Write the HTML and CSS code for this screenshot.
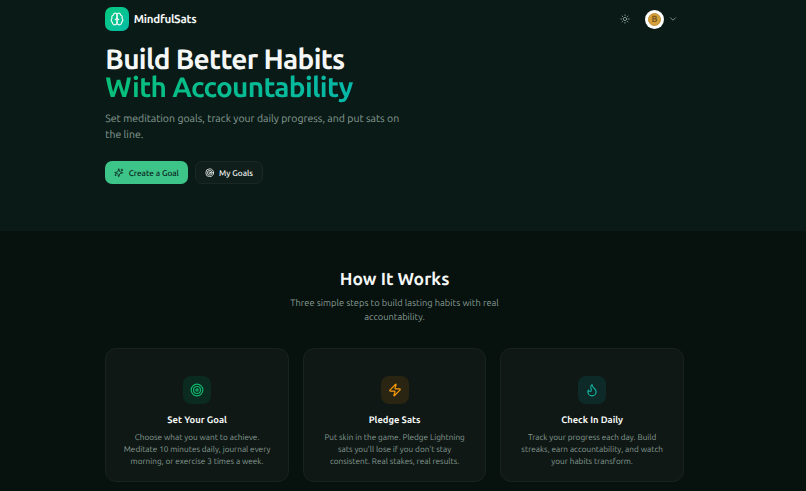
FILE: index.html
```html
<!DOCTYPE html>
<html lang="en">
<head>
    <meta charset="UTF-8">
    <meta name="viewport" content="width=device-width, initial-scale=1.0">
    <title>MindfulSats</title>
    <link rel="stylesheet" href="styles.css">
</head>
<body>
    <div class="hero">
        <header class="container header">
            <a class="brand">
                <span class="logo">
                    <svg class="icon" viewBox="0 0 24 24"><path d="M12 5a3 3 0 1 0-5.997.125 4 4 0 0 0-2.526 5.77 4 4 0 0 0 .556 6.588A4 4 0 1 0 12 18Z"/><path d="M12 5a3 3 0 1 1 5.997.125 4 4 0 0 1 2.526 5.77 4 4 0 0 1-.556 6.588A4 4 0 1 1 12 18Z"/><path d="M15 13a4.5 4.5 0 0 1-3-4 4.5 4.5 0 0 1-3 4"/></svg>
                </span>
                <span class="brand-name">MindfulSats</span>
            </a>
            <div class="header-actions">
                <svg class="icon sun" viewBox="0 0 24 24"><circle cx="12" cy="12" r="4"/><path d="M12 2v2M12 20v2M4.93 4.93l1.41 1.41M17.66 17.66l1.41 1.41M2 12h2M20 12h2M6.34 17.66l-1.41 1.41M19.07 4.93l-1.41 1.41"/></svg>
                <span class="avatar"><span class="coin">B</span></span>
                <svg class="icon chevron" viewBox="0 0 24 24"><path d="m6 9 6 6 6-6"/></svg>
            </div>
        </header>
        <section class="container intro">
            <h1><span>Build Better Habits</span><br><span class="gradient">With Accountability</span></h1>
            <p class="lead">Set meditation goals, track your daily progress, and put sats on<br>the line.</p>
            <div class="buttons">
                <a class="btn btn-primary">
                    <svg class="icon" viewBox="0 0 24 24"><path d="M9.937 15.5A2 2 0 0 0 8.5 14.063l-6.135-1.582a.5.5 0 0 1 0-.962L8.5 9.936A2 2 0 0 0 9.937 8.5l1.582-6.135a.5.5 0 0 1 .963 0L14.063 8.5A2 2 0 0 0 15.5 9.937l6.135 1.581a.5.5 0 0 1 0 .964L15.5 14.063a2 2 0 0 0-1.437 1.437l-1.582 6.135a.5.5 0 0 1-.963 0z"/><path d="M20 3v4M22 5h-4M4 17v2M5 18H3"/></svg>
                    <span>Create a Goal</span>
                </a>
                <a class="btn btn-outline">
                    <svg class="icon" viewBox="0 0 24 24"><circle cx="12" cy="12" r="10"/><circle cx="12" cy="12" r="6"/><circle cx="12" cy="12" r="2"/></svg>
                    <span>My Goals</span>
                </a>
            </div>
        </section>
    </div>

    <section class="container how">
        <h2>How It Works</h2>
        <p class="sub">Three simple steps to build lasting habits with real<br>accountability.</p>
        <div class="cards">
            <div class="card">
                <div class="badge green">
                    <svg class="icon" viewBox="0 0 24 24"><circle cx="12" cy="12" r="10"/><circle cx="12" cy="12" r="6"/><circle cx="12" cy="12" r="2"/></svg>
                </div>
                <h3>Set Your Goal</h3>
                <p>Choose what you want to achieve.<br>Meditate 10 minutes daily, journal every<br>morning, or exercise 3 times a week.</p>
            </div>
            <div class="card">
                <div class="badge amber">
                    <svg class="icon" viewBox="0 0 24 24"><path d="M4 14a1 1 0 0 1-.78-1.63l9.9-10.2a.5.5 0 0 1 .86.46l-1.92 6.02A1 1 0 0 0 13 10h7a1 1 0 0 1 .78 1.63l-9.9 10.2a.5.5 0 0 1-.86-.46l1.92-6.02A1 1 0 0 0 11 14z"/></svg>
                </div>
                <h3>Pledge Sats</h3>
                <p>Put skin in the game. Pledge Lightning<br>sats you'll lose if you don't stay<br>consistent. Real stakes, real results.</p>
            </div>
            <div class="card">
                <div class="badge teal">
                    <svg class="icon" viewBox="0 0 24 24"><path d="M8.5 14.5A2.5 2.5 0 0 0 11 12c0-1.38-.5-2-1-3-1.072-2.143-.224-4.054 2-6 .5 2.5 2 4.9 4 6.5 2 1.6 3 3.5 3 5.5a7 7 0 1 1-14 0c0-1.153.433-2.294 1-3a2.5 2.5 0 0 0 2.5 2.5z"/></svg>
                </div>
                <h3>Check In Daily</h3>
                <p>Track your progress each day. Build<br>streaks, earn accountability, and watch<br>your habits transform.</p>
            </div>
        </div>
    </section>
</body>
</html>
```
FILE: styles.css
```css
* {
    box-sizing: border-box;
    margin: 0;
    padding: 0;
}
body {
    font-family: Ubuntu, "Noto Sans", "Open Sans", sans-serif;
    background-color: #07110e;
    color: #f4f7f5;
    white-space: nowrap;
    overflow: hidden;
    text-rendering: geometricPrecision;
}
.container {
    width: 578.6px;
    margin-left: 105.3px;
}
.icon {
    fill: none;
    stroke: currentColor;
    stroke-width: 2;
    stroke-linecap: round;
    stroke-linejoin: round;
    flex: none;
}
.hero {
    height: 231px;
    background-color: #0a1b17;
}
.header {
    height: 38px;
    display: flex;
    align-items: center;
    justify-content: space-between;
}
.brand {
    display: flex;
    align-items: center;
    gap: 5px;
}
.logo {
    width: 23.5px;
    height: 23.5px;
    border-radius: 7px;
    background: linear-gradient(135deg, #05c97c, #06bda8);
    display: flex;
    align-items: center;
    justify-content: center;
}
.logo .icon {
    width: 14px;
    height: 14px;
}
.brand-name {
    font-size: 11.6px;
    font-weight: 600;
    letter-spacing: -0.29px;
}
.header-actions {
    display: flex;
    align-items: center;
    color: #8da39a;
    padding-right: 6px;
}
.sun {
    width: 10px;
    height: 10px;
    margin-right: 15px;
}
.avatar {
    width: 19px;
    height: 19px;
    border-radius: 50%;
    background: #fff;
    display: flex;
    align-items: center;
    justify-content: center;
    margin-right: 4px;
}
.coin {
    width: 13px;
    height: 13px;
    border-radius: 50%;
    background: #d5a13b;
    border: 1px solid #c18f31;
    color: #79561c;
    font-size: 9px;
    font-weight: 700;
    line-height: 11px;
    text-align: center;
}
.chevron {
    width: 10px;
    height: 10px;
}
.intro {
    padding-top: 8px;
}
h1 {
    font-size: 28px;
    line-height: 28px;
    font-weight: 600;
    letter-spacing: -0.7px;
}
.gradient {
    display: inline-block;
    padding-bottom: 4px;
    background: linear-gradient(90deg, #08c07a, #06b8a8);
    -webkit-background-clip: text;
    background-clip: text;
    color: transparent;
}
.lead {
    margin-top: 4px;
    font-size: 10.5px;
    line-height: 16.4px;
    color: #889c94;
}
.buttons {
    display: flex;
    gap: 7px;
    margin-top: 18px;
}
.btn {
    height: 23.5px;
    border-radius: 7px;
    display: flex;
    align-items: center;
    justify-content: center;
    gap: 5px;
    font-size: 8.2px;
    font-weight: 500;
}
.btn .icon {
    width: 9.5px;
    height: 9.5px;
}
.btn-primary {
    width: 82.5px;
    background: #3dc489;
    color: #07201a;
}
.btn-outline {
    width: 68px;
    background: #0f1e1a;
    border: 1px solid #192823;
}
.how {
    padding-top: 38px;
    text-align: center;
}
h2 {
    font-size: 17.5px;
    line-height: 22px;
    font-weight: 600;
}
.sub {
    margin-top: 5px;
    font-size: 9.3px;
    line-height: 14px;
    color: #889c94;
}
.cards {
    display: grid;
    grid-template-columns: repeat(3, 1fr);
    gap: 14px;
    margin-top: 24px;
}
.card {
    height: 133.5px;
    padding-top: 27px;
    background: #0f1815;
    border: 1px solid #18231f;
    border-radius: 11px;
}
.badge {
    width: 28px;
    height: 28px;
    margin: 0 auto;
    border-radius: 8px;
    display: flex;
    align-items: center;
    justify-content: center;
}
.badge .icon {
    width: 14px;
    height: 14px;
}
.green {
    background: #0b2a20;
    color: #10b86e;
}
.amber {
    background: #2a2413;
    color: #f99c0a;
}
.teal {
    background: #0d2a28;
    color: #12b5a2;
}
h3 {
    margin-top: 9px;
    font-size: 9.4px;
    line-height: 14px;
    font-weight: 600;
}
.card p {
    margin-top: 5px;
    font-size: 8.2px;
    line-height: 11.8px;
    color: #889c94;
}
```
